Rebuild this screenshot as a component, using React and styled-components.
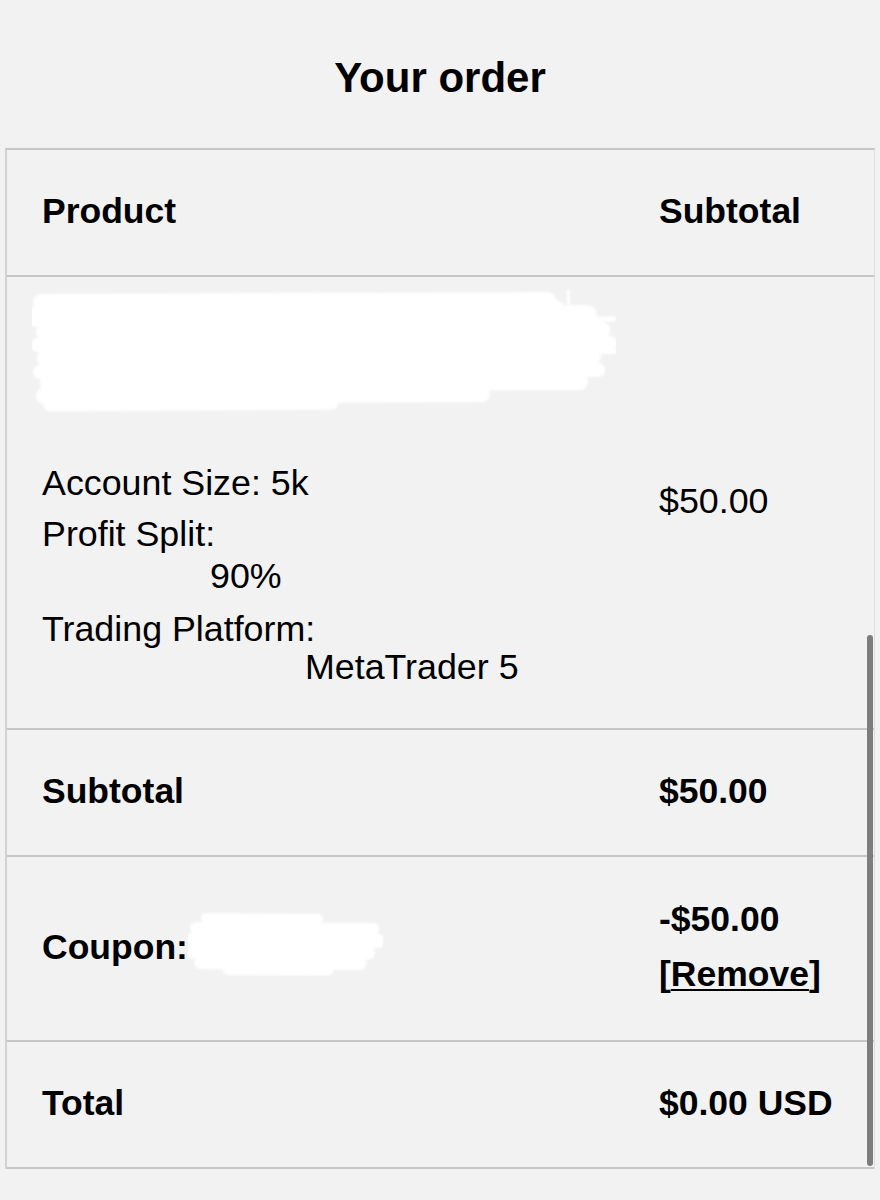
import React from 'react';
import styled, { createGlobalStyle } from 'styled-components';

const GlobalStyle = createGlobalStyle`
  html, body {
    margin: 0;
    padding: 0;
    background: #f2f2f2;
    overflow: hidden;
  }
  body {
    font-family: "Liberation Sans", Arial, sans-serif;
    color: #000;
  }
`;

const Page = styled.div`
  position: relative;
  padding: 54px 5px 0;
  height: 1146px;
`;

const Title = styled.h2`
  margin: 0 0 46px;
  font-size: 42px;
  line-height: 48px;
  font-weight: 700;
  text-align: center;
`;

const Table = styled.div`
  border-top: 2px solid #c6c6c6;
  border-left: 2px solid #d2d2d2;
  border-right: 1px solid #dedede;
`;

const Row = styled.div`
  display: grid;
  grid-template-columns: 617px 1fr;
  min-height: ${(p) => p.$height || 125}px;
  border-bottom: 2px solid #c6c6c6;
`;

const Cell = styled.div`
  display: flex;
  flex-direction: column;
  justify-content: ${(p) => (p.$top ? 'flex-start' : 'center')};
  padding: ${(p) => (p.$top ? '12px 0 42px 35px' : '0 0 4px 35px')};
  font-size: ${(p) => (p.$bold ? '35.5px' : '35.8px')};
  font-weight: ${(p) => (p.$bold ? 700 : 400)};
  line-height: ${(p) => p.$lh || 42}px;
`;

const Scribble = styled.svg`
  display: block;
  margin-left: -10px;
`;

const Meta = styled.div`
  margin-top: ${(p) => p.$gap}px;
  font-size: 35.8px;
  line-height: 38px;
`;

const MetaValue = styled.div`
  margin-top: ${(p) => p.$gap || 0}px;
  padding-left: ${(p) => p.$indent}px;
  font-size: 35.8px;
  line-height: 38px;
`;

const Inline = styled.span`
  display: flex;
  align-items: center;
`;

const CouponMask = styled.svg`
  margin-top: -8px;
`;

const RemoveLink = styled.a`
  color: #000;
  text-decoration: none;
  span {
    text-decoration: underline;
    text-decoration-thickness: 2px;
    text-underline-offset: 3px;
  }
`;

const ScrollThumb = styled.div`
  position: absolute;
  right: 7px;
  top: 635px;
  width: 6px;
  height: 531px;
  border-radius: 4px;
  background: #7d7d7d;
`;

function ProductMask() {
  const strokes = [
    [14, 10, 515, 18],
    [28, 4, 555, 20],
    [43, 12, 570, 16],
    [56, 6, 578, 14],
    [69, 14, 560, 18],
    [83, 8, 566, 14],
    [95, 16, 548, 16],
    [107, 12, 450, 16],
    [116, 18, 300, 13],
  ];
  return (
    <Scribble width="584" height="125" viewBox="0 0 584 125">
      <defs>
        <filter id="soft" x="-5%" y="-10%" width="110%" height="120%">
          <feGaussianBlur stdDeviation="0.9" />
        </filter>
      </defs>
      <g filter="url(#soft)" fill="#fff" stroke="#fff" strokeLinecap="round">
        <path
          d="M16 10 Q180 2 350 4 L520 8 Q548 20 545 55 L540 92 Q500 100 300 110 L30 120 Q10 110 12 60 Z"
          stroke="none"
        />
        {strokes.map(([y, x1, x2, w]) => (
          <line key={y} x1={x1} y1={y} x2={x2} y2={y - 2} strokeWidth={w} />
        ))}
        <line x1="420" y1="32" x2="582" y2="30" strokeWidth="5" />
        <line x1="430" y1="64" x2="582" y2="62" strokeWidth="6" />
        <line x1="536" y1="2" x2="538" y2="40" strokeWidth="3" />
      </g>
    </Scribble>
  );
}

function CouponScribble() {
  const strokes = [
    [8, 18, 130, 10],
    [18, 8, 185, 12],
    [30, 4, 190, 14],
    [42, 6, 180, 14],
    [53, 12, 172, 12],
    [60, 40, 140, 10],
  ];
  return (
    <CouponMask width="195" height="66" viewBox="0 0 195 66">
      <defs>
        <filter id="softCoupon" x="-5%" y="-10%" width="110%" height="120%">
          <feGaussianBlur stdDeviation="0.9" />
        </filter>
      </defs>
      <g filter="url(#softCoupon)" stroke="#fff" strokeLinecap="round">
        {strokes.map(([y, x1, x2, w]) => (
          <line key={y} x1={x1} y1={y} x2={x2} y2={y + 1} strokeWidth={w} />
        ))}
      </g>
    </CouponMask>
  );
}

export default function App() {
  return (
    <Page>
      <GlobalStyle />
      <Title>Your order</Title>
      <Table>
        <Row>
          <Cell $bold>Product</Cell>
          <Cell $bold>Subtotal</Cell>
        </Row>
        <Row>
          <Cell $top>
            <ProductMask />
            <Meta $gap={50}>Account Size: 5k</Meta>
            <Meta $gap={13}>Profit Split:</Meta>
            <MetaValue $gap={4} $indent={168}>90%</MetaValue>
            <Meta $gap={15}>Trading Platform:</Meta>
            <MetaValue $indent={263}>MetaTrader 5</MetaValue>
          </Cell>
          <Cell>$50.00</Cell>
        </Row>
        <Row>
          <Cell $bold>Subtotal</Cell>
          <Cell $bold>$50.00</Cell>
        </Row>
        <Row $height={183}>
          <Cell $bold>
            <Inline>
              Coupon:
              <CouponScribble />
            </Inline>
          </Cell>
          <Cell $bold $lh={55}>
            <div>-$50.00</div>
            <div>
              <RemoveLink href="#">
                [<span>Remove</span>]
              </RemoveLink>
            </div>
          </Cell>
        </Row>
        <Row>
          <Cell $bold>Total</Cell>
          <Cell $bold>$0.00 USD</Cell>
        </Row>
      </Table>
      <ScrollThumb />
    </Page>
  );
}
